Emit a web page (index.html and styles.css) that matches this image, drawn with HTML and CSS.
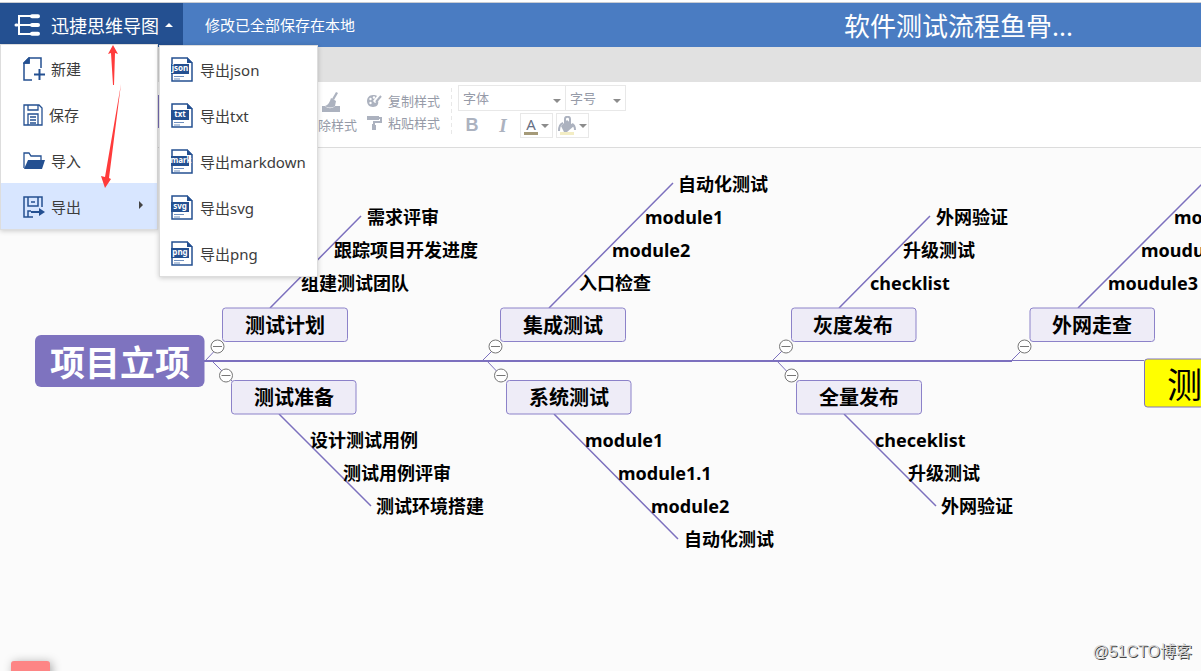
FILE: index.html
```html
<!DOCTYPE html>
<html lang="zh-CN">
<head>
<meta charset="utf-8">
<meta name="viewport" content="width=device-width, initial-scale=1">
<title>迅捷思维导图</title>
<link rel="stylesheet" href="styles.css">
</head>
<body>
<header class="header">
  <button class="brand" type="button" aria-expanded="true">
    <svg class="brand-logo" width="26" height="22" viewBox="0 0 26 22" fill="none" stroke="#fff" stroke-width="2">
      <path d="M17 2H5v18h12M1 11h16"/><path d="M18 2.200h6M18 11h6M18 19.800h6" stroke-width="4" stroke-linecap="round"/><path d="M2 11h1" stroke-width="3" stroke-linecap="round"/>
    </svg>
    <span>迅捷思维导图</span>
    <svg width="8" height="4" viewBox="0 0 8 4" fill="#fff"><path d="M4 0l4 4H0z"/></svg>
  </button>
  <span class="save-state">修改已全部保存在本地</span>
  <h1 class="doc-title">软件测试流程鱼骨...</h1>
</header>
<div class="tabs"></div>
<div class="toolbar">
  <div class="layout-tool"></div>
  <button class="tool clear-style" type="button">
    <svg width="20" height="20" viewBox="0 0 20 20" fill="#acb2bf"><path d="M15 0l2 1-4 7-2-1z"/><path d="M10 6l5 3-1 5c-3 2-7 2-10 0 3-1 5-4 6-8z"/><path d="M1 14h3c3 3 7 3 10 0h5v6H1z"/></svg>
    <span>清除样式</span>
  </button>
  <div class="stack">
    <button class="tool" type="button">
      <svg width="15" height="14" viewBox="0 0 15 14"><path d="M6 1C2 1 0 4 0 7s2 6 6 6 6-3 5-6l-3 2-2-2 4-5C9 1 8 1 6 1z" fill="#acb2bf"/><g fill="#fff"><circle cx="3.500" cy="5" r="1.200"/><circle cx="3.500" cy="9" r="1.200"/><circle cx="7" cy="3.500" r="1.200"/></g><path d="M14 2L9 8" stroke="#acb2bf" stroke-width="2"/></svg>
      复制样式
    </button>
    <button class="tool" type="button">
      <svg width="15" height="14" viewBox="0 0 15 14" fill="#acb2bf"><path d="M0 0h12v1h3v6H8v2h1v5H5V8h1V5h7V3h-1v1H0z"/></svg>
      粘贴样式
    </button>
  </div>
  <div class="format">
    <div class="selects">
      <label class="pick family"><select aria-label="字体"><option>字体</option></select></label>
      <label class="pick size"><select aria-label="字号"><option>字号</option></select></label>
    </div>
    <div class="marks">
      <button class="mark bold" type="button">B</button>
      <button class="mark italic" type="button">I</button>
      <button class="mark boxed" type="button"><span class="font-color">A</span><i class="caret"></i></button>
      <button class="mark boxed" type="button" aria-label="填充颜色">
        <svg width="18" height="20" viewBox="0 0 18 20"><path d="M2 16h14v3H2z" fill="#f3edc4"/><path d="M9 4l7 6-7 6H6L3 10z" fill="#acb2bf"/><path d="M7 8V3c0-3 5-3 5 0v5M5 7c-3 1-4 4-4 8M14 8c2 1 3 3 3 6" fill="none" stroke="#acb2bf" stroke-width="2"/></svg>
        <i class="caret"></i>
      </button>
    </div>
  </div>
</div>

<main class="canvas">
  <svg class="map" width="100%" height="100%">
    <g transform="translate(0 -148)">
      <g class="rib">
        <path d="M270 308l91-92M549 308l124-125M839 308l91-92M1078 308l126-126"/>
        <path d="M279 414l92 92M554 414l124 125M844 414l92 92"/>
        <path class="thin" d="M205 361l18-19M482 361l19-19M772 361l19-19M1011 361l19-19M212 361l20 20M487 361l19 20M777 361l19 20M1012 360.500h132"/>
        <path class="spine" d="M204 361h808"/>
      </g>
      <rect class="root" x="35" y="335" width="169.500" height="52" rx="6"/>
      <text class="root-text" x="120" y="376">项目立项</text>
      <g class="node">
        <rect x="222.500" y="308" width="125" height="33.500" rx="3"/><text x="285" y="333">测试计划</text>
        <rect x="500.500" y="308" width="125" height="33.500" rx="3"/><text x="563" y="333">集成测试</text>
        <rect x="791.500" y="308" width="124.500" height="33.500" rx="3"/><text x="853" y="333">灰度发布</text>
        <rect x="1030" y="308" width="124.500" height="33.500" rx="3"/><text x="1092" y="333">外网走查</text>
        <rect x="231.500" y="380.500" width="124.500" height="33.500" rx="3"/><text x="294" y="405">测试准备</text>
        <rect x="506.500" y="380.500" width="124.500" height="33.500" rx="3"/><text x="569" y="405">系统测试</text>
        <rect x="796.500" y="380.500" width="125" height="33.500" rx="3"/><text x="859" y="405">全量发布</text>
      </g>
      <rect class="goal" x="1144.500" y="359" width="200" height="48" rx="3"/>
      <text class="goal-text" x="1167" y="398">测试完成</text>
      <g class="toggle">
        <circle cx="217.500" cy="346.500" r="6.500"/><circle cx="495.500" cy="346.500" r="6.500"/><circle cx="786" cy="346.500" r="6.500"/><circle cx="1024.500" cy="346.500" r="6.500"/>
        <circle cx="226" cy="375.500" r="6.500"/><circle cx="501" cy="375.500" r="6.500"/><circle cx="791.500" cy="375.500" r="6.500"/>
        <path d="M213 346.500h9M491 346.500h9M781.500 346.500h9M1020 346.500h9M221.500 375.500h9M496.500 375.500h9M787 375.500h9"/>
      </g>
      <g class="leaf">
        <text x="367" y="224">需求评审</text><text x="334" y="257">跟踪项目开发进度</text><text x="301" y="290">组建测试团队</text>
        <text x="678" y="191">自动化测试</text><text x="645" y="224">module1</text><text x="612" y="257">module2</text><text x="579" y="290">入口检查</text>
        <text x="936" y="224">外网验证</text><text x="903" y="257">升级测试</text><text x="870" y="290">checklist</text>
        <text x="1174" y="224">moudule1</text><text x="1141" y="257">moudule2</text><text x="1108" y="290">moudule3</text>
        <text x="310" y="447">设计测试用例</text><text x="343" y="480">测试用例评审</text><text x="376" y="513">测试环境搭建</text>
        <text x="585" y="447">module1</text><text x="618" y="480">module1.1</text><text x="651" y="513">module2</text><text x="684" y="546">自动化测试</text>
        <text x="875" y="447">checeklist</text><text x="908" y="480">升级测试</text><text x="941" y="513">外网验证</text>
      </g>
    </g>
  </svg>
  <div class="badge"></div>
  <span class="watermark">@51CTO博客</span>
</main>

<nav class="menu main-menu">
  <button type="button"><svg width="22" height="24" viewBox="0 0 22 24" fill="none" stroke="#245091" stroke-width="1.500"><path d="M9 23H1V6l5-5h12v10M1 6h5V1"/><path d="M1 6l5-5v5z" fill="#245091"/><path d="M16.500 12v11M11 17.500h11" stroke-width="2"/></svg>新建</button>
  <button type="button"><svg width="20" height="22" viewBox="0 0 20 22" fill="none" stroke="#245091" stroke-width="1.300"><path d="M1 1h15l3 3v17H1zM5 1v5h10V1M5 21V10h10v11M7 13h6M7 16h6M7 19h6"/></svg>保存</button>
  <button type="button"><svg width="22" height="18" viewBox="0 0 22 18"><path d="M1 16V1h5l2 3h10v5" fill="none" stroke="#245091" stroke-width="1.300"/><path d="M5 8h17l-3 9H1z" fill="#245091"/></svg>导入</button>
  <button class="current" type="button"><svg width="22" height="22" viewBox="0 0 22 22" fill="none" stroke="#245091" stroke-width="1.500"><path d="M10 21H1V1h18v10M5 1v9h10V1M8 6h4M5 21v-6h3"/><path d="M8 16h10" stroke-width="2"/><path d="M16 12l6 4-6 4z" fill="#245091" stroke="none"/></svg>导出<i class="more"></i></button>
</nav>
<nav class="menu export-menu">
  <button type="button"><svg class="file" width="22" height="25" viewBox="0 0 22 25"><path class="sheet" d="M1 1h15l5 5v18H1z"/><path class="band" d="M16 0l6 6h-6zM0 7h18v10H0z"/><path class="rows" d="M3 19.500h10M3 22h6"/><text x="9" y="14">json</text></svg>导出json</button>
  <button type="button"><svg class="file" width="22" height="25" viewBox="0 0 22 25"><path class="sheet" d="M1 1h15l5 5v18H1z"/><path class="band" d="M16 0l6 6h-6zM0 7h18v10H0z"/><path class="rows" d="M3 19.500h10M3 22h6"/><text x="9" y="14">txt</text></svg>导出txt</button>
  <button type="button"><svg class="file" width="22" height="25" viewBox="0 0 22 25"><path class="sheet" d="M1 1h15l5 5v18H1z"/><path class="band" d="M16 0l6 6h-6zM0 7h18v10H0z"/><path class="rows" d="M3 19.500h10M3 22h6"/><text x="10" y="14">mark</text></svg>导出markdown</button>
  <button type="button"><svg class="file" width="22" height="25" viewBox="0 0 22 25"><path class="sheet" d="M1 1h15l5 5v18H1z"/><path class="band" d="M16 0l6 6h-6zM0 7h18v10H0z"/><path class="rows" d="M3 19.500h10M3 22h6"/><text x="9" y="14">svg</text></svg>导出svg</button>
  <button type="button"><svg class="file" width="22" height="25" viewBox="0 0 22 25"><path class="sheet" d="M1 1h15l5 5v18H1z"/><path class="band" d="M16 0l6 6h-6zM0 7h18v10H0z"/><path class="rows" d="M3 19.500h10M3 22h6"/><text x="9" y="14">png</text></svg>导出png</button>
</nav>
<svg class="arrows" width="30" height="150" viewBox="0 0 30 150" fill="#ff3b3b"><path d="M13 0l5 9-3-1-1 32h-1l-2-32-3 1z"/><path d="M21 39L5 132l-4-1 4 12 6-9-2-1z"/></svg>
</body>
</html>
```

FILE: styles.css
```css
* { box-sizing: border-box; }

body {
  margin: 0;
  height: 100vh;
  display: flex;
  flex-direction: column;
  overflow: hidden;
  position: relative;
  background: #fff;
  color: #3c3c3c;
  font-family: "Noto Sans", "Noto Sans CJK SC", sans-serif;
  font-size: 15px;
}

button, select {
  font: inherit;
  color: inherit;
  border: 0;
  margin: 0;
  padding: 0;
  background: none;
}

.header {
  flex: none;
  display: flex;
  align-items: center;
  height: 47px;
  padding-top: 3px;
  background: linear-gradient(#fff 2px, #c9ccd2 2px, #c9ccd2 3px, #4a7cc2 3px);
  color: #fff;
}

.brand {
  display: flex;
  align-items: center;
  align-self: stretch;
  width: 183px;
  padding-left: 14px;
  gap: 6px;
  background: #245091;
  font-size: 18px;
  white-space: nowrap;
}

.brand-logo { margin-right: 5px; }
.save-state { margin-left: 22px; padding-bottom: 2px; }

.doc-title {
  margin: 0 128px 0 auto;
  padding-top: 2px;
  font-size: 26px;
  font-weight: 400;
  line-height: 40px;
}

.tabs { flex: none; height: 35px; background: #e1e1e1; }

.toolbar {
  flex: none;
  display: flex;
  height: 66px;
  padding-top: 3px;
  border-bottom: 1px solid #dcdcdc;
  color: #969ba8;
  font-size: 13px;
}

.layout-tool {
  width: 159px;
  height: 33px;
  margin-top: 10px;
  background: #7e73bf;
}

.tool {
  display: flex;
  align-items: center;
  gap: 6px;
  line-height: 22px;
  white-space: nowrap;
}

.clear-style {
  flex-direction: column;
  width: 52px;
  height: 54px;
  margin: 7px 0 0 146px;
  gap: 2px;
}

.stack { margin: 5px 0 0 10px; }

.format {
  margin-left: 11px;
  padding-left: 7px;
  background: repeating-linear-gradient(#e8e8e8 0 4px, transparent 4px 7px) 0 3px / 1px 46px no-repeat;
}

.selects { display: flex; }

.pick {
  position: relative;
  height: 26px;
  border: 1px solid #e8e8e8;
}

.pick select {
  width: 100%;
  height: 24px;
  padding: 0 4px;
  appearance: none;
}

.family { width: 108px; }
.size { width: 60px; border-left: 0; }

.pick::after {
  content: "";
  position: absolute;
  right: 4px;
  top: 13px;
}

.pick::after, .caret {
  border: 4px solid transparent;
  border-top-color: #8c8c8c;
  border-bottom: 0;
}

.marks { display: flex; gap: 3px; margin-top: 2px; }

.mark {
  display: flex;
  align-items: center;
  justify-content: center;
  width: 28px;
  height: 25px;
  color: #acb2bf;
}

.bold { font: bold 18px "Liberation Sans", sans-serif; }
.italic { font: italic bold 19px "Liberation Serif", serif; }
.boxed { width: 33px; border: 1px solid #e8e8e8; gap: 3px; }

.font-color {
  width: 14px;
  height: 19px;
  border-bottom: 3px solid #a59a78;
  color: #687084;
  font-size: 15px;
  line-height: 16px;
}

.canvas {
  flex: 1;
  min-height: 0;
  position: relative;
  overflow: hidden;
  background: #fbfbfb;
}

.map { display: block; }
.rib path { fill: none; stroke: #7c70be; stroke-width: 1.5; }
.rib .thin { stroke-width: 1; }
.rib .spine { stroke-width: 2; }
.root { fill: #7e73bf; }
.map text { font-weight: 700; fill: #000; }
.map .root-text { font-size: 35px; fill: #fff; text-anchor: middle; }
.node rect { fill: #eeecf7; stroke: #8c82c9; }
.node text { font-size: 20px; text-anchor: middle; }
.goal { fill: #ff0; stroke: #7e73bf; }
.map .goal-text { font-size: 35px; font-weight: 400; }
.toggle circle { fill: #fff; stroke: #777; }
.toggle path { stroke: #777; }
.leaf text { font-size: 18px; }

.badge {
  position: absolute;
  left: 11px;
  bottom: -30px;
  width: 39px;
  height: 40px;
  border-radius: 3px;
  background: #fd8585;
  box-shadow: 2px 1px 10px #aaa;
}

.watermark {
  position: absolute;
  right: 9px;
  bottom: 7px;
  color: #d4d4d4;
  font-family: "Liberation Sans", "Noto Sans CJK SC", sans-serif;
  font-size: 16px;
  line-height: 24px;
  text-shadow: 1px 1px 0 #444;
}

.menu {
  position: absolute;
  display: flex;
  flex-direction: column;
  background: #fff;
  border: 1px solid #ddd;
  box-shadow: 0 1px 5px rgba(0, 0, 0, .2);
}

.menu button {
  display: flex;
  align-items: center;
  height: 46px;
  white-space: nowrap;
}

.main-menu { left: 0; top: 44px; width: 158px; }
.main-menu button { padding-left: 22px; gap: 6px; }
.main-menu svg { margin-top: 2px; }
.menu .current { background: #d8e6ff; }

.more {
  margin: 0 14px 3px auto;
  border: 4px solid transparent;
  border-left-color: #444;
  border-right: 0;
}

.export-menu { left: 159px; top: 45px; width: 159px; }
.export-menu button { padding-left: 11px; gap: 7px; }
.sheet { fill: #fff; stroke: #245091; stroke-width: 1.5; }
.band { fill: #245091; }
.rows { stroke: #6f8fbd; stroke-width: 1; }
.file text { fill: #fff; font-size: 8px; font-weight: 700; text-anchor: middle; }

.arrows { position: absolute; left: 100px; top: 45px; }
```
